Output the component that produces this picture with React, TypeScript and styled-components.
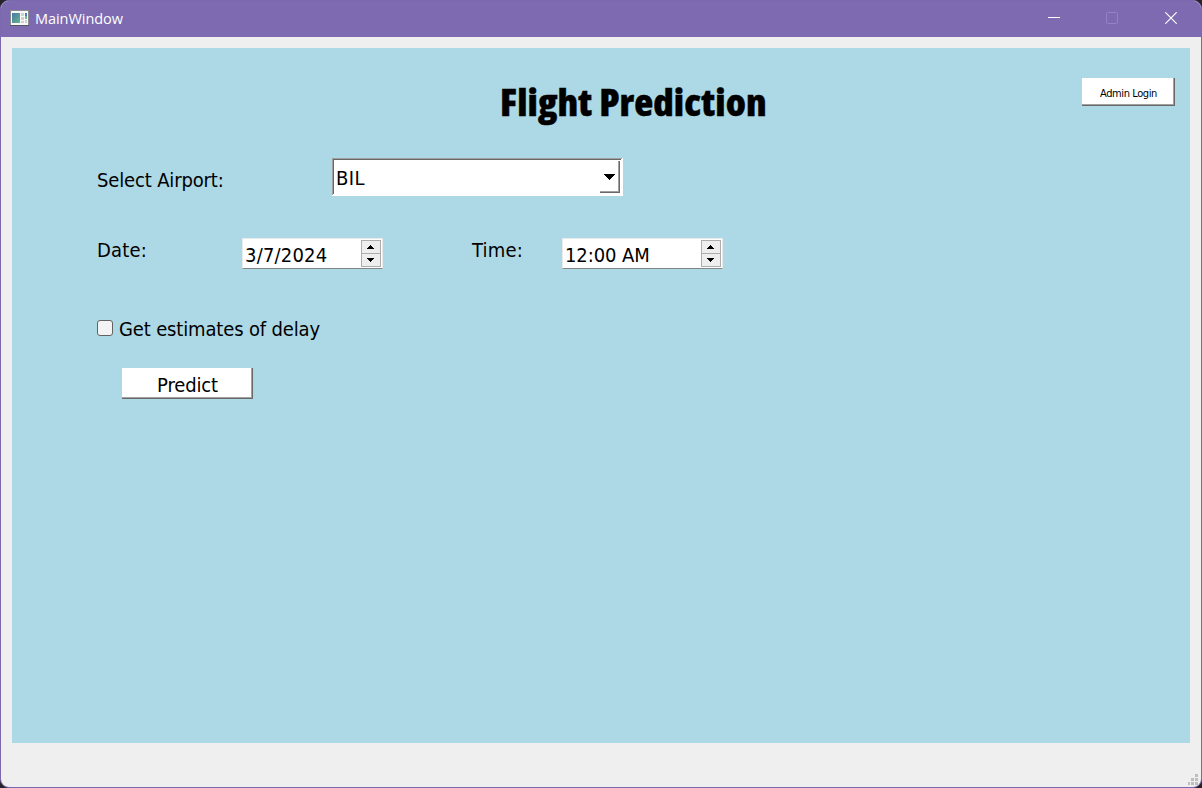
import React from "react";
import styled, { createGlobalStyle } from "styled-components";

const Global = createGlobalStyle`
  * { box-sizing: border-box; }
  body { margin: 0; background: #262329; color: #000; }
`;

const formFont = `"DejaVu Sans Condensed", "DejaVu Sans", sans-serif`;

const Window = styled.div`
  width: 1202px;
  height: 788px;
  display: flex;
  flex-direction: column;
  border: 1px solid #7b68ae;
  border-radius: 9px;
  overflow: hidden;
  background: #efefef;
  font: 20px/24px ${formFont};
  letter-spacing: -0.15px;
`;

const TitleBar = styled.header`
  flex: none;
  height: 36px;
  display: flex;
  align-items: center;
  padding: 0 1px 0 9px;
  background: #7d6ab0;
  color: #fff;
  > svg { margin-bottom: 1px; }
`;

const WindowName = styled.span`
  flex: 1;
  margin: 0 0 0 6px;
  font: 14.5px/20px "Open Sans", sans-serif;
  letter-spacing: -0.05px;
`;

const Caption = styled.button<{ $dim?: boolean }>`
  width: 58.5px;
  height: 36px;
  padding: 0 0 2px;
  border: 0;
  background: none;
  display: flex;
  align-items: center;
  justify-content: center;
  color: ${p => (p.$dim ? "#9584c3" : "#fff")};
  svg { display: block; }
`;

const Client = styled.div`
  flex: 1;
  display: flex;
  flex-direction: column;
  padding: 11px;
`;

const Panel = styled.main`
  width: 1178px;
  height: 695px;
  background: #add8e6;
`;

const Header = styled.div`
  display: flex;
  align-items: flex-start;
  padding: 27px 15px 0 487.5px;
`;

const Title = styled.h1`
  flex: 1;
  margin: 1px 0 0;
  white-space: nowrap;
  font: 800 37px/52px "Open Sans", sans-serif;
  font-stretch: condensed;
  letter-spacing: 0.05px;
  transform: scaleX(1.059);
  transform-origin: left;
  -webkit-text-stroke: 0.4px #000;
`;

const PushButton = styled.button<{ $w: number; $h: number; $small?: boolean }>`
  width: ${p => p.$w}px;
  height: ${p => p.$h}px;
  padding: ${p => (p.$small ? 4 : 2)}px 0 0;
  border: 0;
  background: #fff;
  box-shadow: inset -1px -1px #696969, inset -2px -2px #a0a0a0;
  color: #000;
  font: ${p => (p.$small ? "11px/14px" : "20px/24px")} ${formFont};
  letter-spacing: ${p => (p.$small ? "-0.4px" : "-0.15px")};
`;

const AdminSlot = styled.div`
  padding-top: 3px;
  display: flex;
`;

const Row = styled.div<{ $top: number; $left?: number }>`
  display: flex;
  align-items: flex-start;
  padding: ${p => p.$top}px 0 0 ${p => p.$left ?? 85}px;
`;

const Label = styled.label<{ $w?: number; $drop?: number; $wide?: boolean }>`
  width: ${p => (p.$w ? `${p.$w}px` : "auto")};
  margin-top: ${p => p.$drop ?? 0}px;
  letter-spacing: ${p => (p.$wide ? "0.2px" : "inherit")};
  white-space: nowrap;
`;

const Combo = styled.div`
  width: 291px;
  height: 38px;
  display: flex;
  justify-content: space-between;
  padding: 2px 3px 3px 4px;
  background: #fff;
  box-shadow: inset -1px -1px #fff, inset 1px 1px #a0a0a0, inset -2px -2px #fff, inset 2px 2px #696969;
`;

const ComboText = styled.span`
  padding-top: 6px;
  letter-spacing: 0.4px;
`;

const ComboArrow = styled.span`
  width: 20px;
  height: 32px;
  margin-top: 1px;
  display: flex;
  justify-content: center;
  padding: 13px 1px 0 0;
  box-shadow: inset -1px -1px #696969, inset -2px -2px #a0a0a0;
`;

const SpinBox = styled.div<{ $w: number }>`
  width: ${p => p.$w}px;
  height: 31px;
  display: flex;
  justify-content: space-between;
  padding: 1px 1px 1px 2px;
  border: 1px solid #e9eaea;
  border-bottom-color: #868686;
  border-radius: 1px;
  background: #fff;
`;

const SpinText = styled.span<{ $gap: number }>`
  padding-top: 3px;
  letter-spacing: ${p => p.$gap}px;
  white-space: nowrap;
`;

const Stepper = styled.span`
  width: 20px;
  height: 27px;
  display: flex;
  flex-direction: column;
  border: 1px solid #adadad;
  background: #eee;
`;

const Step = styled.span`
  flex: 1;
  display: flex;
  align-items: center;
  justify-content: center;
  padding-right: 1px;
  & + & { border-top: 1px solid #adadad; }
`;

const Check = styled.input`
  appearance: none;
  width: 16px;
  height: 16px;
  margin: 3px 6px 0 0;
  border: 1px solid #626262;
  border-radius: 3px;
  background: #f3f3f3;
`;

const Grip = styled.svg`
  display: block;
  margin: auto -8px -9px auto;
`;

const AppIcon = () => (
  <svg width="19" height="17" viewBox="0 0 19 17" shapeRendering="crispEdges">
    <defs>
      <linearGradient id="screen" x1="0" y1="0" x2="1" y2="1">
        <stop offset="0" stopColor="#4b79a6" />
        <stop offset="1" stopColor="#62b58b" />
      </linearGradient>
    </defs>
    <rect width="19" height="16" fill="#8c8c8e" />
    <rect x="1" y="1" width="17" height="14" fill="#f8f8f8" />
    <rect x="2" y="3" width="8" height="10" fill="url(#screen)" />
    <path d="M11 3h3v3h-3zM11 7h3v3h-3zM11 11h3v2h-3zM15 10h2v3h-2z" fill="#cfcfd2" />
    <rect x="15" y="3" width="2" height="3" fill="#4681b5" />
    <rect x="15" y="6" width="2" height="3" fill="#71b991" />
    <rect y="15" width="19" height="1" fill="#55545f" />
  </svg>
);

const StepArrow = ({ down }: { down?: boolean }) => (
  <svg width="7" height="4" viewBox="0 0 7 4" shapeRendering="crispEdges">
    <path d={down ? "M0 0h7v1H6v1H5v1H4v1H3V3H2V2H1V1H0z" : "M3 0h1v1h1v1h1v1h1v1H0V3h1V2h1V1h1z"} />
  </svg>
);

const Spinner = ({ value, width, gap }: { value: string; width: number; gap: number }) => (
  <SpinBox $w={width}>
    <SpinText $gap={gap}>{value}</SpinText>
    <Stepper>
      <Step><StepArrow /></Step>
      <Step><StepArrow down /></Step>
    </Stepper>
  </SpinBox>
);

export default function App() {
  return (
    <>
      <Global />
      <Window>
        <TitleBar>
          <AppIcon />
          <WindowName>MainWindow</WindowName>
          <Caption aria-label="Minimize">
            <svg width="12" height="12"><path d="M0 5.5h12" stroke="currentColor" /></svg>
          </Caption>
          <Caption $dim aria-label="Maximize">
            <svg width="12" height="12"><rect x=".5" y=".5" width="11" height="11" rx="1" fill="none" stroke="currentColor" /></svg>
          </Caption>
          <Caption aria-label="Close">
            <svg width="12" height="12"><path d="M.3.3l11.4 11.4M11.7.3L.3 11.7" stroke="currentColor" strokeWidth="1.2" /></svg>
          </Caption>
        </TitleBar>
        <Client>
          <Panel>
            <Header>
              <Title>Flight Prediction</Title>
              <AdminSlot><PushButton $w={93} $h={28} $small>Admin Login</PushButton></AdminSlot>
            </Header>
            <Row $top={30}>
              <Label $w={235} $drop={10}>Select Airport:</Label>
              <Combo>
                <ComboText>BIL</ComboText>
                <ComboArrow>
                  <svg width="11" height="6" viewBox="0 0 11 6" shapeRendering="crispEdges">
                    <path d="M0 0h11v1h-1v1H9v1H8v1H7v1H6v1H5V5H4V4H3V3H2V2H1V1H0z" />
                  </svg>
                </ComboArrow>
              </Combo>
            </Row>
            <Row $top={42}>
              <Label $w={145} $wide>Date:</Label>
              <Spinner value="3/7/2024" width={141} gap={0.2} />
              <Row $top={0} $left={89}>
                <Label $w={90} $wide>Time:</Label>
                <Spinner value="12:00 AM" width={161} gap={-0.1} />
              </Row>
            </Row>
            <Row $top={48}>
              <Check type="checkbox" id="delay" />
              <Label htmlFor="delay">Get estimates of delay</Label>
            </Row>
            <Row $top={27} $left={110}>
              <PushButton $w={131} $h={31}>Predict</PushButton>
            </Row>
          </Panel>
          <Grip width="11" height="11" viewBox="0 0 11 11" shapeRendering="crispEdges">
            <path d="M8 0h3v3H8zM4 4h3v3H4zM8 4h3v3H8zM1 8h2v3H1zM4 8h3v3H4zM8 8h3v3H8z" fill="#bfbfbf" />
          </Grip>
        </Client>
      </Window>
    </>
  );
}
